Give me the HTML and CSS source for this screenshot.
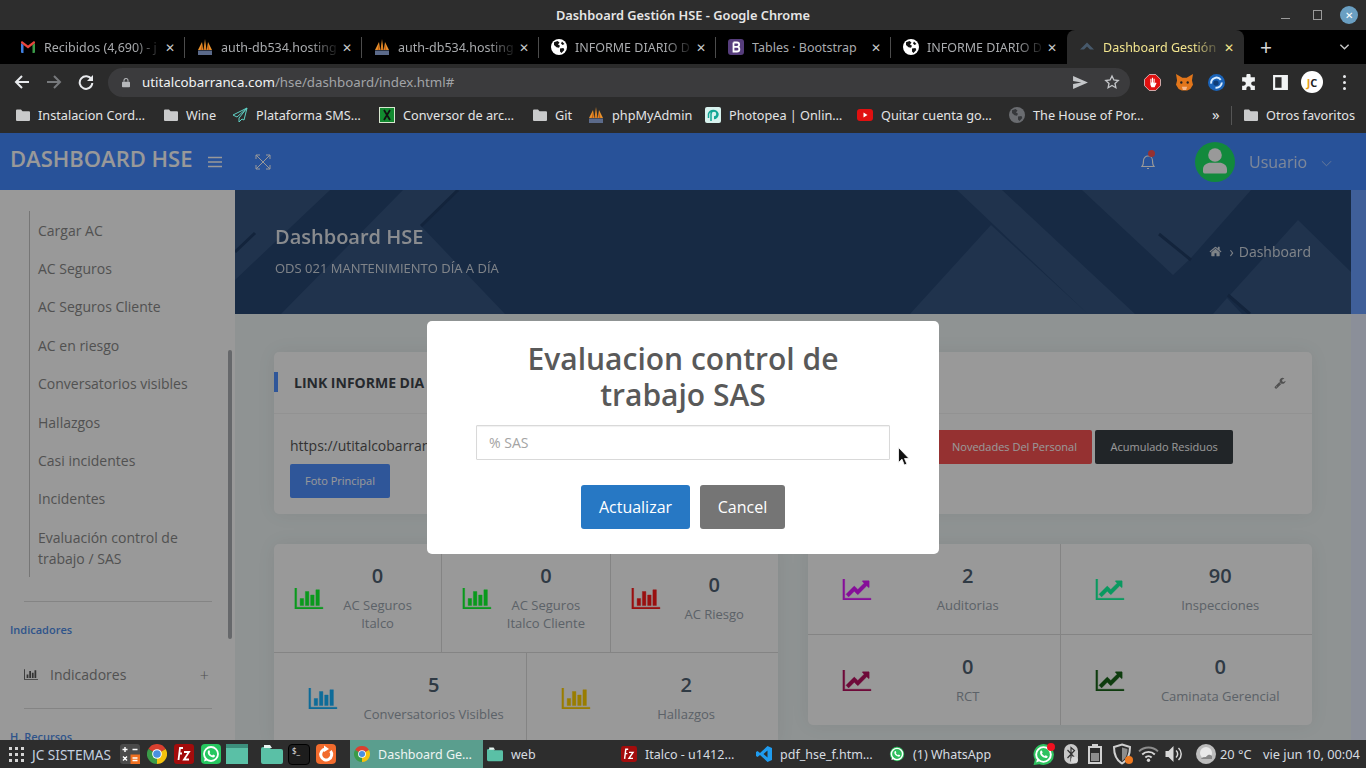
FILE: index.html
```html
<!doctype html>
<html lang="es">
	<head>
		<meta charset="utf-8">
		<title>Dashboard Gestión HSE</title>
		<link rel="stylesheet" href="styles.css">
	</head>
	<body>
		<svg class="defs" xmlns="http://www.w3.org/2000/svg">
			<symbol id="i-bar" viewBox="0 128 2048 1536"><path d="M640 896v512h-256v-512h256zm384-512v1024h-256v-1024h256zm1024 1152v128h-2048v-1536h128v1408h1920zm-640-896v768h-256v-768h256zm384-384v1152h-256v-1152h256z"/></symbol>
			<symbol id="i-line" viewBox="0 128 2048 1536"><path d="M2048 1536v128h-2048v-1536h128v1408h1920zm-128-1248v435q0 21-19.5 29.5t-35.5-7.5l-121-121-633 633q-10 10-23 10t-23-10l-233-233-416 416-192-192 585-585q10-10 23-10t23 10l233 233 464-464-121-121q-16-16-7.5-35.5t29.5-19.5h435q14 0 23 9t9 23z"/></symbol>
			<symbol id="i-folder" viewBox="0 0 16 16"><path d="M1 3.5a1 1 0 0 1 1-1h4l1.5 1.8H14a1 1 0 0 1 1 1V13a1 1 0 0 1-1 1H2a1 1 0 0 1-1-1z"/></symbol>
			<symbol id="i-globe" viewBox="0 0 16 16"><circle cx="8" cy="8" r="8" fill="#fff"/><path fill="#111" d="M3 3.2 6.5 2l2 1.5L7 5.5l2 1.3-1 2-2.5-.6L3 6zM9 9.5l3.5-.5.8 2L10.500 14 9 12.500zM11 2.500 13.500 5 11.500 6 10 4.500z"/></symbol>
			<symbol id="i-mya" viewBox="0 0 16 16"><path fill="#e8912c" d="M1 11 5 3l1.200 8zM6.500 11 8 0l1.500 11zM9.800 11 11 3l4 8z"/><path fill="#c65f10" d="M7.500 11 8 3l.5 8zM3.500 11 5 5l.3 6zM10.700 11 11 5l1.500 6z"/><path fill="#5b6a8a" d="M1 11.500h14V16H1z"/></symbol>
			<symbol id="i-chrome" viewBox="0 0 24 24"><path fill="#d9402f" d="M12 12 1.600 6A12 12 0 0 1 22.400 6z"/><path fill="#3a9b48" d="M12 12 1.600 6A12 12 0 0 0 12 24z"/><path fill="#f4c20d" d="M12 12 22.400 6A12 12 0 0 1 12 24z"/><circle cx="12" cy="12" r="5.800" fill="#fff"/><circle cx="12" cy="12" r="4.600" fill="#4a8fe0"/></symbol>
			<symbol id="i-fz" viewBox="0 0 20 20"><rect width="20" height="20" rx="3" fill="#a30c0c"/><path fill="none" stroke="#fff" stroke-width="1.800" d="M9 4H6L4.500 16M4.800 9.500H8M10 8h5l-5 7.500h5"/></symbol>
			<symbol id="i-wa" viewBox="0 0 20 20"><circle cx="10" cy="10" r="7" fill="none" stroke="#fff" stroke-width="1.800"/><path fill="#fff" d="M3 17.500 4.200 13l3 3zM7.200 6.500l1.200-.3.800 2-.7.900a6 6 0 0 0 2.600 2.400l1-.9 1.900 1-.3 1.200c-1 1-3 .7-5-.8S6.200 8 7.200 6.500z"/></symbol>
		</svg>

		<div class="desktop">
			<div class="titlebar">
				<span class="titlebar-text">Dashboard Gestión HSE - Google Chrome</span>
				<div class="window-btns">
					<span class="win-min"></span>
					<span class="win-max"></span>
					<span class="win-close">✕</span>
				</div>
			</div>

			<div class="tabstrip">
				<div class="tab">
					<svg class="fav" viewBox="0 0 16 16"><path fill="#3f7fe0" d="M1 4l2.500 2v8H2a1 1 0 0 1-1-1z"/><path fill="#3a9b48" d="M15 4l-2.500 2v8H14a1 1 0 0 0 1-1z"/><path fill="#e8453c" d="M1 3.500C1 2.500 2 2 3 2.700L8 6.500l5-3.800c1-.7 2-.2 2 .8v.500l-2.500 2L8 9.500 3.500 6 1 4z"/></svg>
					<span class="tab-title">Recibidos (4,690) - j</span><span class="tab-x">✕</span>
				</div>
				<div class="tab">
					<svg class="fav"><use href="#i-mya"/></svg>
					<span class="tab-title">auth-db534.hosting</span><span class="tab-x">✕</span>
				</div>
				<div class="tab">
					<svg class="fav"><use href="#i-mya"/></svg>
					<span class="tab-title">auth-db534.hosting</span><span class="tab-x">✕</span>
				</div>
				<div class="tab">
					<svg class="fav"><use href="#i-globe"/></svg>
					<span class="tab-title">INFORME DIARIO D</span><span class="tab-x">✕</span>
				</div>
				<div class="tab">
					<svg class="fav" viewBox="0 0 16 16"><rect width="16" height="16" rx="3" fill="#563d7c"/><path fill="none" stroke="#fff" stroke-width="1.800" d="M5.500 3.500v9H9a2.300 2.300 0 0 0 0-4.700H5.500M9 7.800a2.100 2.100 0 0 0 0-4.300H5.500"/></svg>
					<span class="tab-title tab-title-full">Tables · Bootstrap</span><span class="tab-x">✕</span>
				</div>
				<div class="tab tab-before-active">
					<svg class="fav"><use href="#i-globe"/></svg>
					<span class="tab-title">INFORME DIARIO D</span><span class="tab-x">✕</span>
				</div>
				<div class="tab tab-active">
					<svg class="fav" viewBox="0 0 16 16"><path fill="#47596b" d="M8 3.500 15 10.500h-4L8 7.500 5 10.500H1z"/></svg>
					<span class="tab-title">Dashboard Gestión</span><span class="tab-x">✕</span>
				</div>
				<span class="tab-new">+</span>
				<svg class="tab-list" viewBox="0 0 12 8"><path fill="none" stroke="#c8c8c8" stroke-width="1.500" d="M1.500 1.500 6 6l4.500-4.500"/></svg>
			</div>

			<div class="toolbar">
				<span class="tool-btn"><svg viewBox="0 0 16 16" class="tool-ico"><path fill="none" stroke="#e8eaed" stroke-width="2" d="M15 8H2.500M8 2 2 8l6 6"/></svg></span>
				<span class="tool-btn"><svg viewBox="0 0 16 16" class="tool-ico"><path fill="none" stroke="#77797c" stroke-width="2" d="M1 8h12.500M8 2l6 6-6 6"/></svg></span>
				<span class="tool-btn"><svg viewBox="0 0 16 16" class="tool-ico"><path fill="none" stroke="#e8eaed" stroke-width="2" d="M13.500 5.500A6.300 6.300 0 1 0 14.300 9"/><path fill="#e8eaed" d="M15 1v6H9z"/></svg></span>
				<div class="omnibox">
					<svg class="lock" viewBox="0 0 10 12"><path fill="none" stroke="#b5b7ba" stroke-width="1.300" d="M2.500 5V3.500a2.500 2.500 0 0 1 5 0V5"/><rect y="5" width="10" height="7" rx="1" fill="#b5b7ba"/></svg>
					<span class="url"><b>utitalcobarranca.com</b>/hse/dashboard/index.html#</span>
					<svg class="omni-send" viewBox="0 0 16 14"><path fill="#c4c6c9" d="M0 0 16 7 0 14V8.500L9 7 0 5.500z"/></svg>
					<svg class="omni-star" viewBox="0 0 24 24"><path fill="none" stroke="#c4c6c9" stroke-width="2" d="m12 3 2.800 6 6.500.700-4.800 4.400 1.300 6.500L12 17.300l-5.800 3.300 1.300-6.500L2.700 9.700 9.200 9z"/></svg>
				</div>
				<div class="extensions">
					<span class="tool-btn"><svg class="ext-ico" viewBox="0 0 16 16"><path fill="#e01010" stroke="#fff" stroke-width=".6" d="M5 .5h6L15.500 5v6L11 15.500H5L.5 11V5z"/><path fill="#fff" d="M6 4.500h1V8h.5V3.500h1V8H9V4.500h1V9l1-1 .8.500L10 12.500H7L6 10z"/></svg></span>
					<span class="tool-btn"><svg class="ext-ico" viewBox="0 0 16 16"><path fill="#e2761b" d="M0 0l6 3.500h4L16 0l-1 6 1 4-2.500 4-3 1.500h-5L2.500 14 0 10l1-4z"/><path fill="#f6b78a" d="M5.500 12h5l-1 3h-3z"/><circle cx="5" cy="8" r="1.100" fill="#222"/><circle cx="11" cy="8" r="1.100" fill="#222"/></svg></span>
					<span class="tool-btn"><svg class="ext-ico" viewBox="0 0 16 16"><circle cx="8" cy="8" r="8" fill="#1a63b8"/><path fill="none" stroke="#d8ecff" stroke-width="1.800" d="M3 9a5 5 0 0 1 9-3.500M13 8a5 5 0 0 1-6 4.800"/><circle cx="7.500" cy="8.500" r="2.500" fill="#0e3d78"/></svg></span>
					<span class="tool-btn"><svg class="ext-ico" viewBox="0 0 16 16"><path fill="#f1f3f4" d="M6 1.500a2 2 0 0 1 4 0V3h4v4h-1.500a2 2 0 0 0 0 4H14v4h-4v-1.500a2 2 0 0 0-4 0V15H2v-4h1.500a2 2 0 0 0 0-4H2V3h4z"/></svg></span>
					<span class="tool-btn"><svg class="ext-ico" viewBox="0 0 16 16"><path fill="#f1f3f4" fill-rule="evenodd" d="M1 1h14v14H1zM3 3v10h6V3z"/></svg></span>
					<span class="tool-btn"><span class="profile">J<i>C</i></span></span>
					<span class="tool-btn"><span class="menu-dots"><i></i><i></i><i></i></span></span>
				</div>
			</div>

			<div class="bookmarks">
				<span class="bm"><svg class="bm-folder"><use href="#i-folder"/></svg>Instalacion Cord…</span>
				<span class="bm"><svg class="bm-folder"><use href="#i-folder"/></svg>Wine</span>
				<span class="bm"><svg class="bm-ico" viewBox="0 0 16 16"><path fill="none" stroke="#5fd0c5" stroke-width="1" d="M15 1 1 8l4 2 10-9-8 10v4l3-3 2 1z"/></svg>Plataforma SMS…</span>
				<span class="bm"><svg class="bm-ico" viewBox="0 0 16 16"><rect width="16" height="16" fill="#d8e8d0"/><rect x="1" y="1" width="14" height="14" fill="#128a30"/><path stroke="#111" stroke-width="1.800" d="m5 3 6 10M11 3 5 13"/></svg>Conversor de arc…</span>
				<span class="bm"><svg class="bm-folder"><use href="#i-folder"/></svg>Git</span>
				<span class="bm"><svg class="bm-ico"><use href="#i-mya"/></svg>phpMyAdmin</span>
				<span class="bm"><svg class="bm-ico" viewBox="0 0 16 16"><rect width="16" height="16" rx="2" fill="#d8f2ee"/><path fill="none" stroke="#12a594" stroke-width="1.500" d="M6 14V7a3 3 0 1 1 3 3M3.500 11V7A5 5 0 0 1 13 7c0 2.500-2 4.500-4 4.500"/></svg>Photopea | Onlin…</span>
				<span class="bm"><svg class="bm-ico" viewBox="0 0 16 16"><rect y="2" width="16" height="12" rx="3" fill="#e01010"/><path fill="#fff" d="m6.500 5.500 4 2.500-4 2.500z"/></svg>Quitar cuenta go…</span>
				<span class="bm"><svg class="bm-ico" viewBox="0 0 16 16"><circle cx="8" cy="8" r="8" fill="#6a6c70"/><path fill="#36383b" d="M3 3.200 6.500 2l2 1.500L7 5.500l2 1.300-1 2-2.500-.6L3 6zM9 9.500l3.500-.5.800 2L10.500 14 9 12.500z"/></svg>The House of Por…</span>
				<span class="bm-more">»</span>
				<span class="bm bm-other"><svg class="bm-folder"><use href="#i-folder"/></svg>Otros favoritos</span>
			</div>

			<div class="page">
				<header class="topbar">
					<span class="brand">DASHBOARD HSE</span>
					<svg class="burger" viewBox="0 0 14 12"><path stroke="#fff" stroke-width="1.400" d="M0 1.500h14M0 6h14M0 10.500h14"/></svg>
					<svg class="expand" viewBox="0 0 16 16"><path fill="none" stroke="#fff" stroke-width="1" d="M1 5V1h4M11 1h4v4M15 11v4h-4M5 15H1v-4M1 1l14 14M15 1 1 15"/></svg>
					<div class="bell">
						<svg viewBox="0 0 14 18"><path fill="none" stroke="#fff" stroke-width="1.100" d="M1 14.500c1.500-1.500 1.500-3 1.500-6a4.500 4.500 0 0 1 9 0c0 3 0 4.500 1.500 6zM6 16.500h2"/></svg>
						<span class="bell-dot"></span>
					</div>
					<div class="avatar">
						<svg viewBox="0 0 40 40"><circle cx="20" cy="20" r="20" fill="#1ee565"/><circle cx="20" cy="13" r="6.800" fill="#fff"/><path fill="#fff" d="M8 30v-2.500C8 23 12 20.800 15.500 20.800h9c3.500 0 7.500 2.200 7.500 6.700V30a2 2 0 0 1-2 1.500H10A2 2 0 0 1 8 30z"/></svg>
					</div>
					<span class="username">Usuario</span>
					<svg class="user-caret" viewBox="0 0 12 7"><path fill="none" stroke="#fff" stroke-width="1" d="m1 1 5 5 5-5"/></svg>
				</header>

				<div class="page-body">
					<aside class="sidebar">
						<ul class="submenu">
							<li>Cargar AC</li>
							<li>AC Seguros</li>
							<li>AC Seguros Cliente</li>
							<li>AC en riesgo</li>
							<li>Conversatorios visibles</li>
							<li>Hallazgos</li>
							<li>Casi incidentes</li>
							<li>Incidentes</li>
							<li>Evaluación control de trabajo / SAS</li>
						</ul>
						<hr class="side-rule">
						<div class="side-label">Indicadores</div>
						<div class="side-item">
							<svg class="side-ico"><use href="#i-bar"/></svg>
							<span>Indicadores</span>
							<span class="side-plus">+</span>
						</div>
						<hr class="side-rule side-rule-tight">
						<div class="side-label">H. Recursos</div>
						<span class="side-thumb"></span>
					</aside>

					<main class="content">
						<section class="banner">
							<svg class="banner-art" viewBox="0 0 1116 124" preserveAspectRatio="none">
								<path d="M0 0H95L0 90zM168 0H223L186 36 270 124H46zM722 0H767L900 124H853zM756 35 853 124H675zM847 0H1016L956 68 938 85zM1063 30 1116 82V124H1015L995 105zM978 124 992 108 1007 124z"/>
								<path class="banner-shade" d="M0 62 20 43M186 36 223 0M924 44 956 70M993 105 1015 124"/>
							</svg>
							<div>
								<h1 class="banner-title">Dashboard HSE</h1>
								<p class="banner-sub">ODS 021 MANTENIMIENTO DÍA A DÍA</p>
							</div>
							<div class="crumb">
								<svg class="crumb-home" viewBox="0 0 1792 1792"><path d="M1472 992v480q0 26-19 45t-45 19h-384v-384h-256v384h-384q-26 0-45-19t-19-45v-480q0-1 .5-3t.5-3l575-474 575 474q1 2 1 6zm223-69l-62 74q-8 9-21 11h-3q-13 0-21-7l-692-577-692 577q-12 8-24 7-13-2-21-11l-62-74q-8-10-7-23.5t11-21.5l719-599q32-26 76-26t76 26l244 204v-195q0-14 9-23t23-9h192q14 0 23 9t9 23v408l219 182q10 8 11 21.5t-7 23.5z"/></svg>
								<span class="crumb-sep">›</span>
								<span>Dashboard</span>
							</div>
						</section>

						<div class="panels">
							<section class="card link-card">
								<div class="card-head">
									<h2>LINK INFORME DIA</h2>
									<svg class="wrench" viewBox="0 0 1792 1792"><path d="M448 1472q0-26-19-45t-45-19-45 19-19 45 19 45 45 19 45-19 19-45zm644-420l-682 682q-37 37-90 37-52 0-91-37l-106-108q-38-36-38-90 0-53 38-91l681-681q39 98 114.5 173.5t173.5 114.5zm634-435q0 39-23 106-47 134-164.5 217.5t-258.5 83.5q-185 0-316.5-131.5t-131.5-316.5 131.5-316.5 316.5-131.5q58 0 121.5 16.5t107.5 46.5q16 11 16 28t-16 28l-293 169v224l193 107q5-3 79-48.5t135.5-81 70.5-35.5q15 0 23.5 10t8.5 25z"/></svg>
								</div>
								<div class="card-body">
									<div class="link-row">
										<span class="link-url">https://utitalcobarran</span>
										<a class="btn btn-red">Novedades Del Personal</a>
										<a class="btn btn-dark">Acumulado Residuos</a>
									</div>
									<a class="btn btn-blue">Foto Principal</a>
								</div>
							</section>

							<div class="stat-grid">
								<section class="card stat-card">
									<div class="stat-row stat-row-tall">
										<div class="stat">
											<svg class="stat-ico c-green"><use href="#i-bar"/></svg>
											<div class="stat-text"><strong>0</strong><span>AC Seguros Italco</span></div>
										</div>
										<div class="stat">
											<svg class="stat-ico c-green"><use href="#i-bar"/></svg>
											<div class="stat-text"><strong>0</strong><span>AC Seguros Italco Cliente</span></div>
										</div>
										<div class="stat">
											<svg class="stat-ico c-red"><use href="#i-bar"/></svg>
											<div class="stat-text"><strong>0</strong><span>AC Riesgo</span></div>
										</div>
									</div>
									<div class="stat-row">
										<div class="stat">
											<svg class="stat-ico c-blue"><use href="#i-bar"/></svg>
											<div class="stat-text"><strong>5</strong><span>Conversatorios Visibles</span></div>
										</div>
										<div class="stat">
											<svg class="stat-ico c-yellow"><use href="#i-bar"/></svg>
											<div class="stat-text"><strong>2</strong><span>Hallazgos</span></div>
										</div>
									</div>
								</section>
								<section class="card stat-card stat-card-short">
									<div class="stat-row">
										<div class="stat">
											<svg class="stat-ico c-purple"><use href="#i-line"/></svg>
											<div class="stat-text"><strong>2</strong><span>Auditorias</span></div>
										</div>
										<div class="stat">
											<svg class="stat-ico c-teal"><use href="#i-line"/></svg>
											<div class="stat-text"><strong>90</strong><span>Inspecciones</span></div>
										</div>
									</div>
									<div class="stat-row">
										<div class="stat">
											<svg class="stat-ico c-wine"><use href="#i-line"/></svg>
											<div class="stat-text"><strong>0</strong><span>RCT</span></div>
										</div>
										<div class="stat">
											<svg class="stat-ico c-forest"><use href="#i-line"/></svg>
											<div class="stat-text"><strong>0</strong><span>Caminata Gerencial</span></div>
										</div>
									</div>
								</section>
							</div>
						</div>
					</main>
					<div class="page-scroll"></div>
				</div>

				<div class="overlay">
					<div class="modal">
						<h2 class="modal-title">Evaluacion control de trabajo SAS</h2>
						<input class="modal-input" placeholder="% SAS">
						<div class="modal-actions">
							<button class="modal-btn modal-ok">Actualizar</button>
							<button class="modal-btn modal-cancel">Cancel</button>
						</div>
					</div>
					<svg class="cursor" viewBox="0 0 12 19"><path fill="#111" stroke="#fff" stroke-width=".8" d="M.5.500v15l3.500-3.300 2.300 5.800 2.600-1-2.400-5.500H11z"/></svg>
				</div>
			</div>

			<footer class="taskbar">
				<span class="dots-cell"><span class="app-dots"><i></i><i></i><i></i><i></i><i></i><i></i><i></i><i></i><i></i></span></span>
				<span class="task-label">JC SISTEMAS</span>
				<span class="launch"><svg class="app" viewBox="0 0 20 20"><rect width="20" height="20" rx="3" fill="#4b4b4b"/><rect x="10.500" y="10.500" width="9.500" height="9.500" fill="#f07020"/><path stroke="#fff" stroke-width="1.400" d="M2.500 5.500h5M5 3v5M12.500 5.500h5M3 12.500l4 4M7 12.500l-4 4M12.500 14h5M12.500 16.500h5"/></svg></span>
				<span class="launch"><svg class="app"><use href="#i-chrome"/></svg></span>
				<span class="launch"><svg class="app"><use href="#i-fz"/></svg></span>
				<span class="launch"><svg class="app" viewBox="0 0 20 20"><rect width="20" height="20" rx="4" fill="#26c760"/><use href="#i-wa" width="20" height="20"/></svg></span>
				<span class="launch"><svg class="app app-wide" viewBox="0 0 22 20"><rect width="22" height="20" fill="#5ac0a6"/><path fill="#3c8f7c" d="M0 0h22v4H0z"/></svg></span>
				<span class="launch"><svg class="app app-wide" viewBox="0 0 22 20"><path fill="#5ac0a6" d="M0 5a2 2 0 0 1 2-2h6l2 2h10a2 2 0 0 1 2 2v11a2 2 0 0 1-2 2H2a2 2 0 0 1-2-2z"/><path fill="#e8f4f1" d="M3 1h6l2 3H3z"/></svg></span>
				<span class="launch"><span class="term">$_</span></span>
				<span class="launch"><svg class="app" viewBox="0 0 20 20"><rect width="20" height="20" rx="4" fill="#f26b2d"/><path fill="none" stroke="#fff" stroke-width="3" d="M14.500 7a5.500 5.500 0 1 1-5-2"/><path fill="#fff" d="m8 1.500 5 3.500-5 3z"/></svg></span>
				<span class="task task-active"><svg class="task-ico"><use href="#i-chrome"/></svg><span>Dashboard Ge…</span></span>
				<span class="task"><svg class="task-ico" viewBox="0 0 22 20"><path fill="#5ac0a6" d="M0 5a2 2 0 0 1 2-2h6l2 2h10a2 2 0 0 1 2 2v11a2 2 0 0 1-2 2H2a2 2 0 0 1-2-2z"/><path fill="#e8f4f1" d="M3 1h6l2 3H3z"/></svg><span>web</span></span>
				<span class="task"><svg class="task-ico"><use href="#i-fz"/></svg><span>Italco - u1412…</span></span>
				<span class="task"><svg class="task-ico" viewBox="0 0 16 16"><path fill="#1f9cf0" d="M11.500 0 16 2v12l-4.500 2L4 9l-2.500 2L0 10V6l1.500-1L4 7zM11.500 4.500 7.500 8l4 3.500z"/></svg><span>pdf_hse_f.htm…</span></span>
				<span class="task"><svg class="task-ico" viewBox="0 0 20 20"><circle cx="10" cy="10" r="9" fill="#2fbf5e"/><use href="#i-wa" width="20" height="20"/></svg><span>(1) WhatsApp</span></span>
				<span class="tray tray-first"><span class="tray-wa"><svg viewBox="0 0 20 20"><path fill="#2fc25f" d="M10 0a10 10 0 0 1 0 20 10 10 0 0 1-4-.8L.5 20l1.300-5A10 10 0 0 1 10 0z"/><use href="#i-wa" width="20" height="20"/></svg><i></i></span></span>
				<span class="tray"><svg class="tray-ico" viewBox="0 0 14 20"><rect width="14" height="20" rx="7" fill="#c9c9c9"/><path fill="none" stroke="#333" stroke-width="1.200" d="m3.500 6 7 7.500L7 16.500v-13l3.500 3L3.500 14"/><circle cx="10.500" cy="16" r="3.500" fill="#d8d8d8"/></svg></span>
				<span class="tray"><svg class="tray-ico" viewBox="0 0 14 20"><path fill="#d0d0d0" d="M4 0h6v2h4v18H0V2h4zM2 4v14h10V4z"/><path fill="#8d8d8d" d="M3 9h8v8H3z"/></svg></span>
				<span class="tray"><svg class="tray-shield" viewBox="0 0 22 22"><path fill="none" stroke="#d0d0d0" stroke-width="2" d="M10 1.500 18 4c0 8-2 13-8 16.500C4 17 2 12 2 4z"/><path fill="#8d8d8d" d="M10 4.500 15.500 6c0 5.500-1.500 9.500-5.500 12z"/><circle cx="17" cy="17" r="4" fill="#f07a20"/></svg></span>
				<span class="tray"><svg class="tray-wifi" viewBox="0 0 20 16"><path fill="none" stroke="#8d8d8d" stroke-width="1.800" d="M1 5.500a12.800 12.800 0 0 1 18 0"/><path fill="none" stroke="#d8d8d8" stroke-width="1.800" d="M4 8.500a8.500 8.500 0 0 1 12 0M7 11.300a4.300 4.300 0 0 1 6 0"/><circle cx="10" cy="14" r="1.600" fill="#d8d8d8"/></svg></span>
				<span class="tray"><svg class="tray-wifi" viewBox="0 0 20 18"><path fill="#d8d8d8" d="M1 6h3l5-5v16l-5-5H1z"/><path fill="none" stroke="#d8d8d8" stroke-width="1.500" d="M11.500 5.500a4.500 4.500 0 0 1 0 7M14 3a8 8 0 0 1 0 12"/></svg></span>
				<span class="tray"><svg class="tray-ico tray-weather" viewBox="0 0 20 20"><circle cx="10" cy="10" r="10" fill="#bdbdbd"/><circle cx="10" cy="9" r="6" fill="#e9e9e9"/><path fill="#888" d="M5 15c2-3 4-1 6-3s3-1 5 0v3z"/></svg></span>
				<span class="tray-text tray-temp">20 °C</span>
				<span class="tray-text">vie jun 10, 00:04</span>
			</footer>
		</div>
	</body>
</html>
```

FILE: styles.css
```css
* {
	box-sizing: border-box;
}

html, body {
	margin: 0;
	height: 100%;
	overflow: hidden;
}

body {
	font-family: "Open Sans", sans-serif;
	font-size: 14px;
}

.defs {
	display: none;
}

.desktop {
	display: grid;
	grid-template-rows: 30px 34px 34px 35px 607px 28px;
	width: 1366px;
	height: 768px;
	overflow: hidden;
}

/* browser chrome */

.titlebar {
	position: relative;
	display: flex;
	align-items: center;
	justify-content: center;
	background-color: #2d2d2d;
	color: #e6e6e6;
	font-family: "Noto Sans", sans-serif;
	font-size: 12.8px;
	font-weight: 600;
}

.window-btns {
	position: absolute;
	right: 8px;
	top: 0;
	display: flex;
	align-items: center;
	height: 30px;
}

.win-min {
	width: 9px;
	height: 1px;
	margin-right: 23px;
	margin-top: 7px;
	background-color: #9a9a9a;
}

.win-max {
	width: 9px;
	height: 10px;
	margin-right: 18px;
	border: 1px solid #9a9a9a;
}

.win-close {
	width: 18px;
	height: 18px;
	border-radius: 50%;
	background-color: #6a9fc2;
	color: #fff;
	font-size: 10px;
	font-weight: 400;
	line-height: 18px;
	text-align: center;
}

.tabstrip {
	display: grid;
	grid-template-columns: 177px 177px 177px 177px 175px 176px 177px 44px 1fr;
	align-items: center;
	padding-left: 8px;
	background-color: #000;
	font-family: "Noto Sans", sans-serif;
	font-size: 12.5px;
	color: #a9abae;
}

.tab {
	position: relative;
	display: flex;
	align-items: center;
	height: 34px;
	padding: 0 8px 0 12px;
}

.tab::after {
	content: "";
	position: absolute;
	right: 0;
	top: 7px;
	height: 21px;
	width: 1px;
	background-color: #4c4c4c;
}

.tab-before-active::after, .tab-active::after {
	display: none;
}

.fav {
	flex: none;
	width: 16px;
	height: 16px;
	margin-right: 8px;
}

.tab-title {
	flex: 1;
	overflow: hidden;
	white-space: nowrap;
	-webkit-mask-image: linear-gradient(to right, #000 78%, rgba(0,0,0,0.15));
	mask-image: linear-gradient(to right, #000 78%, rgba(0,0,0,0.15));
}

.tab-title-full {
	-webkit-mask-image: none;
	mask-image: none;
}

.tab-x {
	flex: none;
	width: 14px;
	margin-left: 4px;
	color: #c8cacc;
	font-size: 12px;
	text-align: center;
}

.tab-active {
	border-radius: 8px 8px 0 0;
	background-color: #2b2b2b;
	color: #f2e58e;
}

.tab-active .tab-x {
	color: #f2e58e;
}

.tab-new {
	color: #d8d8d8;
	font-size: 21px;
	line-height: 34px;
	text-align: center;
}

.tab-list {
	width: 11px;
	height: 8px;
	margin-left: 51px;
}

.toolbar {
	display: flex;
	align-items: center;
	padding: 2px 0 0 6px;
	background-color: #2b2b2b;
}

.tool-btn {
	display: flex;
	align-items: center;
	justify-content: center;
	flex: none;
	width: 32px;
	height: 32px;
}

.tool-ico {
	width: 16px;
	height: 16px;
}

.omnibox {
	display: flex;
	align-items: center;
	width: 1022px;
	height: 29px;
	margin-left: 6px;
	padding: 0 10px 0 14px;
	border-radius: 15px;
	background-color: #3b3b3d;
	font-family: "Noto Sans", sans-serif;
	font-size: 13.3px;
	color: #a2a4a7;
}

.lock {
	width: 8px;
	height: 11px;
	margin-right: 12px;
}

.url {
	flex: 1;
}

.url b {
	color: #f1f3f4;
	font-weight: 400;
}

.omni-send {
	width: 15px;
	height: 13px;
	margin-right: 16px;
}

.omni-star {
	width: 16px;
	height: 16px;
}

.extensions {
	display: flex;
	align-items: center;
	margin-left: 6px;
}

.ext-ico {
	width: 17px;
	height: 17px;
}

.profile {
	display: flex;
	align-items: center;
	justify-content: center;
	width: 22px;
	height: 22px;
	border-radius: 50%;
	background-color: #fff;
	color: #e8a020;
	font-size: 11px;
	font-weight: 700;
}

.profile i {
	color: #222;
	font-style: normal;
}

.menu-dots {
	display: flex;
	flex-direction: column;
	gap: 3px;
}

.menu-dots i {
	width: 3px;
	height: 3px;
	border-radius: 50%;
	background-color: #e8eaed;
}

.bookmarks {
	display: grid;
	grid-template-columns: 148px 69px 147px 153px 56px 117px 152px 152px 202px 32px 1fr;
	align-items: center;
	padding: 0 0 1px 15px;
	background-color: #2b2b2b;
	font-family: "Noto Sans", sans-serif;
	font-size: 12.7px;
	color: #e3e4e5;
}

.bm {
	display: flex;
	align-items: center;
	white-space: nowrap;
}

.bm-folder {
	flex: none;
	width: 16px;
	height: 16px;
	margin-right: 7px;
	fill: #c9cacb;
}

.bm-ico {
	flex: none;
	width: 16px;
	height: 16px;
	margin-right: 8px;
}

.bm-more {
	position: relative;
	height: 21px;
	padding-left: 1px;
	font-size: 15px;
	line-height: 19px;
}

.bm-more::after {
	content: "";
	position: absolute;
	left: 20px;
	top: 1px;
	width: 1px;
	height: 19px;
	background-color: #555;
}

/* page behind the dialog */

.page {
	position: relative;
	display: flex;
	flex-direction: column;
	overflow: hidden;
	background-color: #eef5f5;
}

.topbar {
	display: flex;
	align-items: center;
	flex: none;
	height: 57px;
	padding-left: 10px;
	background-color: #4489ff;
	color: #fff;
}

.brand {
	width: 198px;
	font-size: 22px;
	font-weight: 600;
	margin-top: -8px;
}

.burger {
	width: 14px;
	height: 12px;
}

.expand {
	width: 16px;
	height: 16px;
	margin-left: 33px;
}

.bell {
	position: relative;
	width: 14px;
	height: 18px;
	margin-left: 870px;
	margin-top: -1px;
}

.bell svg {
	display: block;
	width: 14px;
	height: 18px;
}

.bell-dot {
	position: absolute;
	right: 0;
	top: -2px;
	width: 7px;
	height: 7px;
	border-radius: 50%;
	background-color: #fb5353;
}

.avatar {
	width: 40px;
	height: 40px;
	margin-left: 40px;
}

.avatar svg {
	display: block;
}

.username {
	margin-left: 14px;
	font-size: 16px;
	opacity: 0.75;
}

.user-caret {
	width: 11px;
	height: 7px;
	margin-left: 14px;
	margin-top: 3px;
	opacity: 0.6;
}

.page-body {
	position: relative;
	display: flex;
	flex: 1;
	min-height: 0;
}

.sidebar {
	position: relative;
	flex: none;
	width: 235px;
	padding-top: 21px;
	overflow: hidden;
	background-color: #fff;
	color: #888;
}

.submenu {
	margin: 0 0 0 29px;
	padding: 0;
	border-left: 1px solid #c5c5c5;
	list-style: none;
}

.submenu li {
	padding: 8.7px 30px 8.7px 8px;
	line-height: 21px;
}

.side-rule {
	height: 1px;
	margin: 24px 23px 0 24px;
	border: 0;
	background-color: #dcdcdc;
}

.side-rule-tight {
	margin-top: 23px;
}

.side-label {
	padding: 20px 0 0 10px;
	color: #4f8de8;
	font-size: 11px;
	font-weight: 600;
	line-height: 15px;
}

.side-item {
	display: flex;
	align-items: center;
	height: 21px;
	margin-top: 27px;
	padding: 0 24px;
}

.side-ico {
	width: 14px;
	height: 11px;
	margin-right: 12px;
	fill: #555;
}

.side-plus {
	margin-left: auto;
	margin-right: 2px;
	font-size: 16px;
	font-weight: 300;
}

.side-thumb {
	position: absolute;
	left: 228px;
	top: 160px;
	width: 4px;
	height: 289px;
	border-radius: 2px;
	background-color: #aaaeb2;
}

.content {
	flex: 1;
	min-width: 0;
}

.banner {
	position: relative;
	display: flex;
	align-items: center;
	justify-content: space-between;
	height: 124px;
	padding: 0 40px;
	background-color: #274672;
	color: #fff;
}

.banner-art {
	position: absolute;
	left: 0;
	top: 0;
	width: 100%;
	height: 100%;
	fill: #365680;
}

.banner-shade {
	fill: none;
	stroke: #203c64;
	stroke-width: 3;
}

.banner > div {
	position: relative;
}

.banner-title {
	margin: 0 0 9px;
	font-size: 20px;
	font-weight: 600;
	line-height: 27px;
	opacity: 0.88;
}

.banner-sub {
	margin: 0 0 5px;
	font-size: 13px;
	line-height: 18px;
	opacity: 0.8;
}

.crumb {
	display: flex;
	align-items: center;
	padding-bottom: 2px;
	font-size: 14px;
	opacity: 0.8;
}

.crumb-home {
	width: 13px;
	height: 13px;
	fill: #fff;
}

.crumb-sep {
	margin: 0 5px 0 8px;
}

.panels {
	padding: 38px 39px 0;
}

.card {
	overflow: hidden;
	border-radius: 5px;
	background-color: #fff;
	box-shadow: 0 0 20px rgba(0,0,0,0.06);
}

.link-card {
	height: 162px;
}

.card-head {
	position: relative;
	display: flex;
	align-items: center;
	justify-content: space-between;
	height: 62px;
	padding: 0 26px 0 20px;
	border-bottom: 1px solid #f4f4f4;
}

.card-head::before {
	content: "";
	position: absolute;
	left: 0;
	top: 20px;
	width: 4px;
	height: 20px;
	background-color: #4f8fff;
}

.card-head h2 {
	margin: 0;
	color: #3f454c;
	font-size: 14px;
	font-weight: 700;
}

.wrench {
	width: 12px;
	height: 12px;
	fill: #888;
}

.card-body {
	padding: 16px 16px 0;
}

.link-row {
	display: flex;
	align-items: center;
	gap: 3px;
}

.link-url {
	width: 644px;
	margin-top: -4px;
	overflow: hidden;
	color: #555;
	white-space: nowrap;
}

.btn {
	display: inline-block;
	height: 34px;
	padding: 0 15px;
	border-radius: 2px;
	color: #fff;
	font-size: 11px;
	line-height: 34px;
}

.btn-red {
	background-color: #f85353;
}

.btn-dark {
	padding: 0 15.5px;
	background-color: #373e44;
}

.btn-blue {
	width: 100px;
	padding: 0;
	background-color: #4f8fff;
	text-align: center;
}

.stat-grid {
	display: grid;
	grid-template-columns: 504px 504px;
	gap: 30px;
	margin-top: 30px;
}

.stat-card-short {
	height: 181px;
}

.stat-row {
	display: flex;
	height: 91px;
	border-bottom: 1px solid #dcdcdc;
}

.stat-card-short .stat-row:last-child {
	border-bottom: 0;
}

.stat-row-tall {
	height: 109px;
}

.stat {
	display: flex;
	align-items: center;
	flex: 1;
	padding: 0 23px 0 7px;
	border-right: 1px solid #dcdcdc;
}

.stat:last-child {
	border-right: 0;
}

.stat-ico {
	flex: none;
	width: calc((100% + 30px) / 3);
	height: 21px;
	fill: currentColor;
	stroke: currentColor;
	stroke-width: 30;
}

.stat-text {
	flex: 1;
	padding-bottom: 3px;
	text-align: center;
}

.stat-text strong {
	display: block;
	margin-bottom: 7px;
	color: #4f6172;
	font-size: 20px;
	font-weight: 600;
	line-height: 27px;
}

.stat-text span {
	display: block;
	margin: 0 -5px;
	color: #99a3ad;
	font-size: 13px;
	line-height: 18px;
}

.c-green { color: #10ff30; }
.c-red { color: #ff1a1a; }
.c-blue { color: #18b4ff; }
.c-yellow { color: #ffd000; }
.c-purple { color: #e018ff; }
.c-teal { color: #10ffa0; }
.c-wine { color: #b81060; }
.c-forest { color: #186418; }

.page-scroll {
	flex: none;
	width: 15px;
	background: linear-gradient(#6a9eff 124px, #e8eeff 124px);
}

/* dialog */

.overlay {
	position: absolute;
	inset: 0;
	display: flex;
	align-items: center;
	justify-content: center;
	padding-top: 2px;
	background-color: rgba(0,0,0,0.4);
}

.modal {
	display: flex;
	flex-direction: column;
	align-items: center;
	width: 512px;
	height: 233px;
	padding-top: 20px;
	border-radius: 5px;
	background-color: #fff;
}

.modal-title {
	width: 400px;
	margin: 0;
	color: #595959;
	font-size: 30px;
	font-weight: 600;
	line-height: 36px;
	text-align: center;
}

.modal-input {
	width: 414px;
	height: 35px;
	margin-top: 12px;
	padding: 0 12px;
	border: 1px solid #d9d9d9;
	border-radius: 1px;
	box-shadow: inset 0 1px 1px rgba(0,0,0,0.06);
	font-family: inherit;
	font-size: 14px;
	outline: none;
}

.modal-input::placeholder {
	color: #a4a4a4;
}

.modal-actions {
	display: flex;
	gap: 10px;
	margin-top: 25px;
}

.modal-btn {
	height: 44px;
	border: 0;
	border-radius: 3px;
	color: #fff;
	font-family: inherit;
	font-size: 16px;
}

.modal-ok {
	width: 109px;
	background-color: #2778c4;
}

.modal-cancel {
	width: 85px;
	background-color: #757575;
}

.cursor {
	position: absolute;
	left: 898px;
	top: 314px;
	width: 12px;
	height: 19px;
}

/* panel at the bottom */

.taskbar {
	display: grid;
	grid-template-columns: 32px 88px 27px 27px 27px 25px 35px 27px 28px 34px 133px 134px 135px 133px 143px 5px 31px 24px 24px 26px 26px 32px 24px 43px 1fr;
	align-items: center;
	background-color: #2d2d2d;
	color: #d7dce0;
	font-family: "Noto Sans", sans-serif;
	font-size: 12.5px;
	white-space: nowrap;
}

.dots-cell {
	padding-left: 9px;
}

.app-dots {
	display: grid;
	grid-template-columns: repeat(3, 3px);
	gap: 3px;
}

.app-dots i {
	width: 3px;
	height: 3px;
	background-color: #d5d5d5;
}

.task-label {
	color: #c5d2e0;
	font-size: 13.6px;
}

.launch {
	display: flex;
	align-items: center;
}

.app {
	width: 20px;
	height: 20px;
}

.app-wide {
	width: 22px;
}

.term {
	display: block;
	width: 22px;
	height: 21px;
	padding-left: 3px;
	border: 1px solid #000;
	border-radius: 4px;
	background-color: #1d1d1d;
	color: #ddd;
	font-size: 8px;
	line-height: 12px;
}

.task {
	display: flex;
	align-items: center;
	height: 28px;
	padding-left: 4px;
}

.task-active {
	background-color: #5a9e8e;
	color: #eef4f2;
}

.task-ico {
	flex: none;
	width: 16px;
	height: 16px;
	margin-right: 8px;
}

.tray {
	display: flex;
	align-items: center;
}

.tray-first {
	grid-column: 17;
}

.tray-wa {
	position: relative;
	display: block;
	width: 21px;
	height: 21px;
}

.tray-wa svg {
	display: block;
	width: 21px;
	height: 21px;
}

.tray-wa i {
	position: absolute;
	right: -1px;
	top: -1px;
	width: 8px;
	height: 8px;
	border-radius: 50%;
	background-color: #f01020;
}

.tray-ico {
	width: 14px;
	height: 20px;
}

.tray-shield {
	width: 22px;
	height: 22px;
}

.tray-wifi {
	width: 21px;
	height: 18px;
}

.tray-weather {
	width: 20px;
	height: 20px;
}

.tray-text {
	color: #d7dce0;
	font-size: 12.8px;
}
```
